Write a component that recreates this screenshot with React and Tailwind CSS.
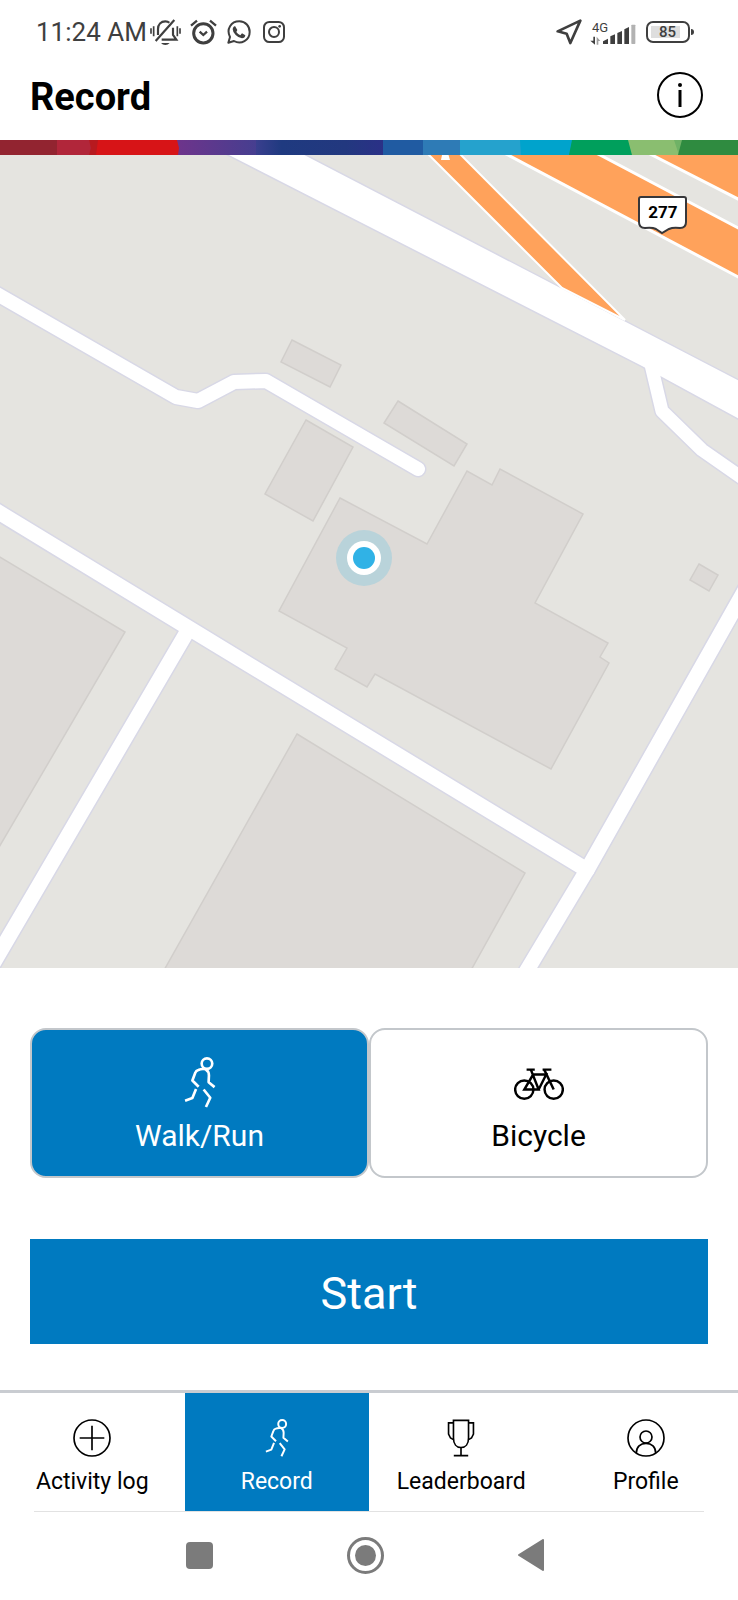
import React, { useState } from 'react';
import clsx from 'clsx';

function RunIcon({ className }) {
  return (
    <svg viewBox="0 0 96 154" fill="none" stroke="currentColor" strokeWidth="8" strokeLinejoin="round" className={className} aria-hidden="true">
      <circle cx="69" cy="20" r="16" />
      <path d="M44 90 25 71 34 47Q36 41 43 39 53 35 65 37 75 43 75 56L74 76 92 91" />
      <path d="M36 97 25 124 3 132" />
      <path d="M59 98 79 123 66 151" />
    </svg>
  );
}

function BikeIcon({ className }) {
  return (
    <svg viewBox="0 0 152 98" fill="none" stroke="currentColor" strokeWidth="7.5" className={className} aria-hidden="true">
      <circle cx="31" cy="66" r="28" />
      <circle cx="121" cy="66" r="28" />
      <path d="M38 5H63M87 5H114" />
      <path d="M51 5 75 66H31L58 20H98L75 66" />
      <path d="M92 5 121 66" />
    </svg>
  );
}

function PlusCircleIcon({ className }) {
  return (
    <svg viewBox="0 0 114 114" fill="none" stroke="currentColor" strokeWidth="5" className={className} aria-hidden="true">
      <circle cx="57" cy="57" r="54" />
      <path d="M20 57H94M57 20V94" />
    </svg>
  );
}

function TrophyIcon({ className }) {
  return (
    <svg viewBox="0 0 84 116" fill="none" stroke="currentColor" strokeWidth="5" className={className} aria-hidden="true">
      <path d="M19 4H65V58C65 76 56 87 42 87S19 76 19 58Z" />
      <path d="M19 12H4V46L10 58 19 63M65 12H80V46L74 58 65 63" />
      <path d="M42 87V112M20 112H64" />
    </svg>
  );
}

function ProfileIcon({ className }) {
  return (
    <svg viewBox="0 0 114 114" fill="none" stroke="currentColor" strokeWidth="5" className={className} aria-hidden="true">
      <circle cx="57" cy="57" r="54" />
      <circle cx="57" cy="54" r="18" />
      <path d="M28 102C28 84 40 73 57 73S86 84 86 102" />
    </svg>
  );
}

function StatusBar() {
  return (
    <div className="flex h-16 items-center justify-between pl-9 pr-11 text-[#3f3f3f]">
      <div className="flex items-center">
        <span className="text-[26px] leading-8">11:24 AM</span>
        {/* muted bell */}
        <svg viewBox="0 0 93 78" fill="none" stroke="currentColor" strokeWidth="6.5" className="ml-[3px] h-[26px] w-[31px]">
          <path d="M3 28V44M11 22V52M82 22V52M90 28V44" strokeWidth="5" />
          <path d="M24 48V30C24 16 33 7 46 7 51 7 55 8 58 11" />
          <path d="M69 26V48L79 62H35" />
          <path d="M17 66 73 3" />
          <path d="M33 72H59Q54 78 46 78T33 72Z" fill="currentColor" stroke="none" />
        </svg>
        {/* alarm */}
        <svg viewBox="0 0 81 78" fill="none" stroke="currentColor" strokeWidth="9" className="ml-[9px] h-[26px] w-[27px]">
          <circle cx="40" cy="43" r="29" />
          <path d="M3 20 21 5M60 5 78 20" strokeWidth="7" />
          <path d="M29 38 40 48 51 38" strokeWidth="7" />
        </svg>
        {/* whatsapp */}
        <svg viewBox="0 0 72 72" fill="none" stroke="currentColor" strokeWidth="6" className="ml-[10px] h-6 w-6">
          <path d="M4 68 9 51C-3 27 12 4 37 4 56 4 68 19 68 36 68 61 42 75 21 63Z" strokeLinejoin="round" />
          <path d="M24 18 31 30 28 36Q33 43 40 46L45 40 55 46Q54 55 45 55 36 55 26 45 17 36 17 27 18 20 24 18Z" fill="currentColor" stroke="none" />
        </svg>
        {/* instagram */}
        <svg viewBox="0 0 66 66" fill="none" stroke="currentColor" strokeWidth="6" className="ml-3 h-[22px] w-[22px]">
          <rect x="3" y="3" width="60" height="60" rx="16" />
          <circle cx="33" cy="33" r="15" />
          <circle cx="50" cy="16" r="4" fill="currentColor" stroke="none" />
        </svg>
      </div>

      <div className="flex items-center">
        <svg viewBox="0 0 78 78" fill="none" stroke="currentColor" strokeWidth="8" strokeLinejoin="round" className="h-[26px] w-[26px]">
          <path d="M73 5 5 37 32 44 43 72Z" />
        </svg>
        <div className="ml-2 flex h-7 items-end">
          {/* the network label reaches over the shortest bars */}
          <div className="flex w-3 flex-col">
            <span className="pl-[2px] text-[13px] leading-4">4G</span>
            <svg viewBox="0 0 36 30" fill="currentColor" className="h-[10px] w-3">
              <path d="M10 2H15V26L1 14H10Z" />
              <path d="M20 26V2L31 15H25V26Z" opacity=".5" />
            </svg>
          </div>
          <svg viewBox="0 0 102 72" fill="currentColor" className="h-6 w-[34px]">
            <path d="M3 66V58L18 50V66ZM25 66V43L39 37V66ZM46 66V33L60 27V66ZM67 66V22L81 15V66Z" />
            <rect x="88" y="8" width="12" height="58" rx="2" opacity=".4" />
          </svg>
        </div>
        <div className="ml-[10px] flex items-center">
          <div className="flex h-[22px] w-[44px] rounded-[7px] border-2 border-[#3f3f3f] p-[3px] pr-2">
            <span className="flex flex-1 items-center justify-center bg-[#dedede] pl-1 text-[15px] leading-4 font-medium">85</span>
          </div>
          <div className="ml-px h-[6px] w-[3px] rounded-r-sm bg-[#3f3f3f]" />
        </div>
      </div>
    </div>
  );
}

function RainbowStrip() {
  return (
    <svg viewBox="0 0 738 15" preserveAspectRatio="none" className="block h-[15px] w-full" aria-hidden="true">
      <defs>
        <linearGradient id="violet">
          <stop offset="0" stopColor="#6e348b" />
          <stop offset="1" stopColor="#433f90" />
        </linearGradient>
        <linearGradient id="navy">
          <stop offset="0" stopColor="#3a3f8e" />
          <stop offset=".2" stopColor="#1f3a80" />
          <stop offset=".7" stopColor="#22387f" />
          <stop offset="1" stopColor="#2b3087" />
        </linearGradient>
      </defs>
      <path fill="#922430" d="M0 0H58V15H0Z" />
      <path fill="#b1263a" d="M57 0H92V15H57Z" />
      <path fill="#b71a1f" d="M89 0 91 8 89 15H100V0Z" />
      <path fill="#d71417" d="M98 0H180V15H96Z" />
      <path fill="url(#violet)" d="M177 0H262V15H178L179 8Z" />
      <path fill="url(#navy)" d="M256 0H384V15H256Z" />
      <path fill="#205ba2" d="M383 0H424V15H383Z" />
      <path fill="#2e7bb6" d="M423 0H460V15H423Z" />
      <path fill="#25a2cd" d="M460 0H522V15H460Z" />
      <path fill="#00a3cc" d="M520 0H573V15H521Z" />
      <path fill="#009f5c" d="M572 0H634V15H569Z" />
      <path fill="#8abe70" d="M628 0H684V15H632Z" />
      <path fill="#6fb266" d="M674 0H684V15H679Z" />
      <path fill="#2f8b40" d="M682 0H738V15H678Z" />
    </svg>
  );
}

const buildings = [
  '292,340 341,365 330,387 281,362',
  '398,401 467,444 454,466 384,423',
  '306,420 353,447 313,521 265,494',
  '340,498 427,544 467,471 492,485 500,469 583,514 535,603 608,643 600,657 609,663 551,769 375,674 367,687 335,669 347,648 279,611',
  '699,564 718,575 709,591 690,580',
  '-2,556 125,632 -2,849',
  '297,734 525,873 470,972 163,972',
];

const roads = [
  { d: 'M-10 290 176 397 198 401 234 382 266 381 418 469', width: 14 },
  { d: 'M-10 507 187 627 587 870', width: 15 },
  { d: 'M187 632-10 969', width: 15 },
  { d: 'M745 590 587 870 526 972', width: 15 },
  { d: 'M648 352 662 411 702 450 745 480', width: 13 },
];

const highway = '229,155 219,149 219,145 285,145 745,384 745,422 642,366';

function RecordMap() {
  return (
    <svg viewBox="0 155 738 813" className="block h-auto w-full bg-[#e5e4e0]" role="img" aria-label="Map">
      <g fill="#dddad7" stroke="#d1cecb" strokeWidth="1.5">
        {buildings.map((points) => (
          <polygon key={points} points={points} />
        ))}
      </g>

      {/* casing first, white fill on top so the junctions merge */}
      <g fill="none" stroke="#d8d8e6" strokeLinejoin="round" strokeLinecap="round">
        {roads.map((road) => (
          <path key={road.d} d={road.d} strokeWidth={road.width + 3} />
        ))}
        <polygon points={highway} strokeWidth="3" />
      </g>
      <g fill="none" stroke="#fff" strokeLinejoin="round" strokeLinecap="round">
        {roads.map((road) => (
          <path key={road.d} d={road.d} strokeWidth={road.width} />
        ))}
      </g>
      <polygon points={highway} fill="#fff" />

      <g fill="#ffa25b" stroke="#fff" strokeWidth="3">
        <path d="M419 145 429 155 562 288 625 320 461 155 451 145Z" strokeWidth="2" />
        <path d="M488 145 508 155 742 279V230L600 155 580 145Z" />
        <path d="M632 145 652 155 742 201V145Z" />
      </g>
      <path d="M443 150H447L450 160H441Z" fill="#fff" />

      <path
        d="M641 197H684Q686 197 686 199V222Q686 228 680 228 673 227 669 229L662 233 656 229Q652 227 645 228 639 228 639 222V199Q639 197 641 197Z"
        fill="#fff"
        stroke="#37373a"
        strokeWidth="2"
      />
      <text x="663" y="218" textAnchor="middle" fontSize="17" fontWeight="700" fontFamily="Roboto, sans-serif">277</text>

      <circle cx="364" cy="558" r="28" fill="#b9d3da" />
      <circle cx="364" cy="558" r="17" fill="#fff" />
      <circle cx="364" cy="558" r="11" fill="#30b2e6" />
    </svg>
  );
}

const activities = [
  { id: 'run', name: 'Walk/Run', icon: <RunIcon className="h-[51px] w-8" /> },
  { id: 'bike', name: 'Bicycle', icon: <BikeIcon className="h-8 w-[50px]" /> },
];

const tabs = [
  { name: 'Activity log', path: '#activity', icon: <PlusCircleIcon className="size-[38px]" /> },
  { name: 'Record', path: '#record', icon: <RunIcon className="h-[38px] w-6" /> },
  { name: 'Leaderboard', path: '#leaderboard', icon: <TrophyIcon className="h-[38px] w-7" /> },
  { name: 'Profile', path: '#profile', icon: <ProfileIcon className="size-[38px]" /> },
];

export default function App() {
  const [activity, setActivity] = useState('run');
  const activeTab = 'Record';

  return (
    <div className="min-h-screen bg-white font-['Roboto',sans-serif] text-black">
      <StatusBar />

      <header className="flex h-[76px] items-center justify-between px-[30px] pb-[14px]">
        <h1 className="pt-1 text-[38px] leading-10 font-bold">Record</h1>
        <button type="button" aria-label="Info" className="mr-1">
          <svg viewBox="0 0 48 48" fill="none" stroke="currentColor" strokeWidth="2" className="size-12">
            <circle cx="24" cy="24" r="22" />
            <path d="M24 19V36" strokeWidth="3" />
            <circle cx="24" cy="14" r="2" fill="currentColor" stroke="none" />
          </svg>
        </button>
      </header>

      <RainbowStrip />
      <RecordMap />

      <main className="flex flex-col gap-[61px] px-[30px] pt-[60px] pb-[46px]">
        <div className="grid grid-cols-2">
          {activities.map((item) => (
            <button
              key={item.id}
              type="button"
              aria-pressed={activity === item.id}
              onClick={() => setActivity(item.id)}
              className={clsx(
                'flex h-[150px] flex-col items-center rounded-2xl border-2 border-[#c3c7cb] pt-[26px] text-[30px] leading-8',
                activity === item.id ? 'bg-[#007ac0] text-white' : 'bg-white text-black'
              )}
            >
              <span className="mb-3 flex h-[52px] items-end">
                <span className={clsx(item.id === 'bike' && 'pb-2')}>{item.icon}</span>
              </span>
              {item.name}
            </button>
          ))}
        </div>

        <button type="button" className="h-[105px] bg-[#007ac0] pt-1 text-[45px] text-white">
          Start
        </button>
      </main>

      <nav className="grid grid-cols-4 border-t-[3px] border-[#c9ccd1]">
        {tabs.map((tab) => (
          <a
            key={tab.name}
            href={tab.path}
            className={clsx(
              'flex h-[118px] flex-col items-center gap-[11px] pt-[26px] text-[23px] leading-7',
              tab.name === activeTab && 'bg-[#007ac0] text-white'
            )}
          >
            {tab.icon}
            {tab.name}
          </a>
        ))}
      </nav>

      <div className="mx-[34px] border-t border-[#e2e2e2]" />

      <div className="flex h-[86px] items-center justify-center gap-[134px] pr-2 text-[#7b7b7b]">
        <button type="button" aria-label="Recent apps" className="size-[27px] rounded bg-current" />
        <button type="button" aria-label="Home" className="flex size-[37px] items-center justify-center rounded-full border-[3px] border-current">
          <span className="size-[21px] rounded-full bg-current" />
        </button>
        <button type="button" aria-label="Back">
          <svg viewBox="0 0 26 32" fill="currentColor" stroke="currentColor" strokeWidth="2" strokeLinejoin="round" className="h-8 w-[26px]">
            <path d="M25 1V31L1 16Z" />
          </svg>
        </button>
      </div>
    </div>
  );
}
